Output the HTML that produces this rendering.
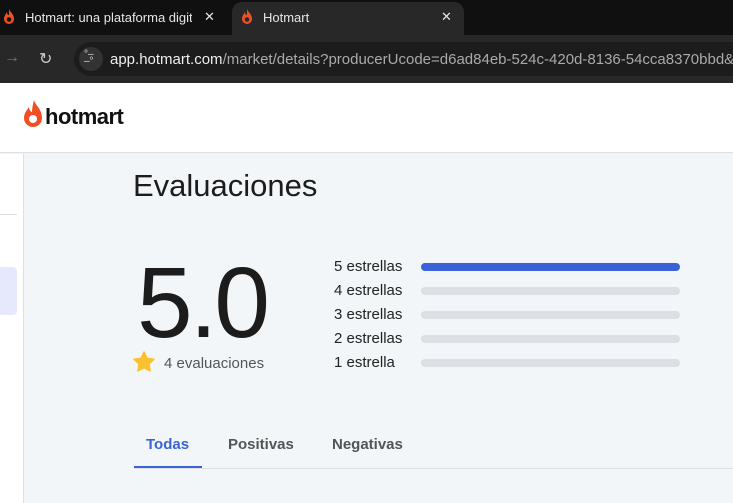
<!DOCTYPE html>
<html><head><meta charset="utf-8"><style>
*{margin:0;padding:0;box-sizing:border-box}
body{width:733px;height:503px;overflow:hidden;background:#f3f6f8;font-family:"Liberation Sans",sans-serif;position:relative}
.abs{position:absolute}
.tabs{left:0;top:0;width:733px;height:35px;background:#101010}
.tab2{left:232px;top:2px;width:232px;height:34px;background:#282828;border-radius:10px 10px 0 0}
.tabt{color:#e6e6e6;font-size:13px}
.bar{left:0;top:35px;width:733px;height:48px;background:#282828}
.url{left:74px;top:42px;width:659px;height:34px;background:#1c1c1c;border-radius:17px 0 0 17px}
.hdr{left:0;top:83px;width:733px;height:70px;background:#fff;border-bottom:1px solid #dde0e3}
.side{left:0;top:154px;width:24px;height:349px;background:#fff;border-right:1px solid #dde0e3}
.lbl{left:334px;font-size:15px;color:#222;}
.b{left:421px;width:259px;height:8px;border-radius:4px;background:#dcdfe4}
</style></head><body>
<div class="abs tabs"></div>
<div class="abs tab2"></div>
<svg class="abs" style="left:3px;top:9px" width="12" height="16" viewBox="0 0 12 16"><path d="M6 0C7 3 11 5 11 10a5 5 0 0 1-10 0C1 7 3 5 4 3c0 2 1 3 2 3C6 4 6 2 6 0z" fill="#f04e23"/><circle cx="6" cy="10.5" r="2.3" fill="#101010"/></svg>
<div class="abs tabt" style="left:25px;top:10px;width:167px;white-space:nowrap;overflow:hidden">Hotmart: una plataforma digital</div>
<div class="abs tabt" style="left:204px;top:9px">✕</div>
<svg class="abs" style="left:241px;top:9px" width="12" height="16" viewBox="0 0 12 16"><path d="M6 0C7 3 11 5 11 10a5 5 0 0 1-10 0C1 7 3 5 4 3c0 2 1 3 2 3C6 4 6 2 6 0z" fill="#f04e23"/><circle cx="6" cy="10.5" r="2.3" fill="#282828"/></svg>
<div class="abs tabt" style="left:263px;top:10px">Hotmart</div>
<div class="abs tabt" style="left:441px;top:9px">✕</div>
<div class="abs bar"></div>
<div class="abs" style="left:4px;top:49px;color:#777;font-size:16px">→</div>
<div class="abs" style="left:39px;top:49px;color:#ccc;font-size:16px">↻</div>
<div class="abs url"></div>
<div class="abs" style="left:79px;top:47px;width:24px;height:24px;border-radius:12px;background:#333"></div>
<div class="abs" style="left:84px;top:51px;color:#ddd;font-size:10px;line-height:7px">°–<br>–°</div>
<div class="abs" style="left:110px;top:51px;width:623px;overflow:hidden;font-size:15px;color:#aaa;white-space:nowrap"><span style="color:#eee">app.hotmart.com</span>/market/details?producerUcode=d6ad84eb-524c-420d-8136-54cca8370bbd&amp;produ</div>
<div class="abs hdr"></div>
<svg class="abs" style="left:22px;top:100px" width="22" height="30" viewBox="0 0 22 30"><path d="M12 0C13 5 20 9 20 18a9 9 0 0 1-18 0C2 13 5 10 7 7c0 3 2 5 3 5C10 8 11 4 12 0z" fill="#f04e23"/><circle cx="11" cy="19" r="4" fill="#fff"/></svg>
<div class="abs" style="left:45px;top:104px;font-size:22px;font-weight:bold;color:#111;letter-spacing:-0.5px">hotmart</div>
<div class="abs side"></div>
<div class="abs" style="left:0;top:214px;width:17px;height:1px;background:#dde0e3"></div>
<div class="abs" style="left:0;top:267px;width:17px;height:48px;background:#e5e9fb;border-radius:0 4px 4px 0"></div>
<div class="abs" style="left:133px;top:168px;font-size:31px;color:#1c1c1c">Evaluaciones</div>
<div class="abs" style="left:137px;top:248px;font-size:100px;font-weight:300;color:#1c1c1c;letter-spacing:-3px;line-height:110px">5.0</div>
<svg class="abs" style="left:133px;top:351px" width="22" height="21" viewBox="0 0 24 23"><path d="M12 1l3.4 7 7.6 1-5.5 5.3 1.3 7.6L12 18.3 5.2 21.9l1.3-7.6L1 9l7.6-1z" fill="#fbc02d" stroke="#fbc02d" stroke-linejoin="round" stroke-width="1.5"/></svg>
<div class="abs" style="left:164px;top:355px;font-size:15px;color:#555">4 evaluaciones</div>
<div class="abs lbl" style="top:258px">5 estrellas</div>
<div class="abs lbl" style="top:282px">4 estrellas</div>
<div class="abs lbl" style="top:306px">3 estrellas</div>
<div class="abs lbl" style="top:330px">2 estrellas</div>
<div class="abs lbl" style="top:354px">1 estrella</div>
<div class="abs b" style="top:263px;background:#3a63d8"></div>
<div class="abs b" style="top:287px"></div>
<div class="abs b" style="top:311px"></div>
<div class="abs b" style="top:335px"></div>
<div class="abs b" style="top:359px"></div>
<div class="abs" style="left:134px;top:468px;width:599px;height:1px;background:#dde0e3"></div>
<div class="abs" style="left:134px;top:466px;width:68px;height:2px;background:#3a63d8"></div>
<div class="abs" style="left:146px;top:436px;font-size:15px;font-weight:bold;color:#3a63d8">Todas</div>
<div class="abs" style="left:228px;top:436px;font-size:15px;font-weight:bold;color:#555">Positivas</div>
<div class="abs" style="left:332px;top:436px;font-size:15px;font-weight:bold;color:#555">Negativas</div>
</body></html>
